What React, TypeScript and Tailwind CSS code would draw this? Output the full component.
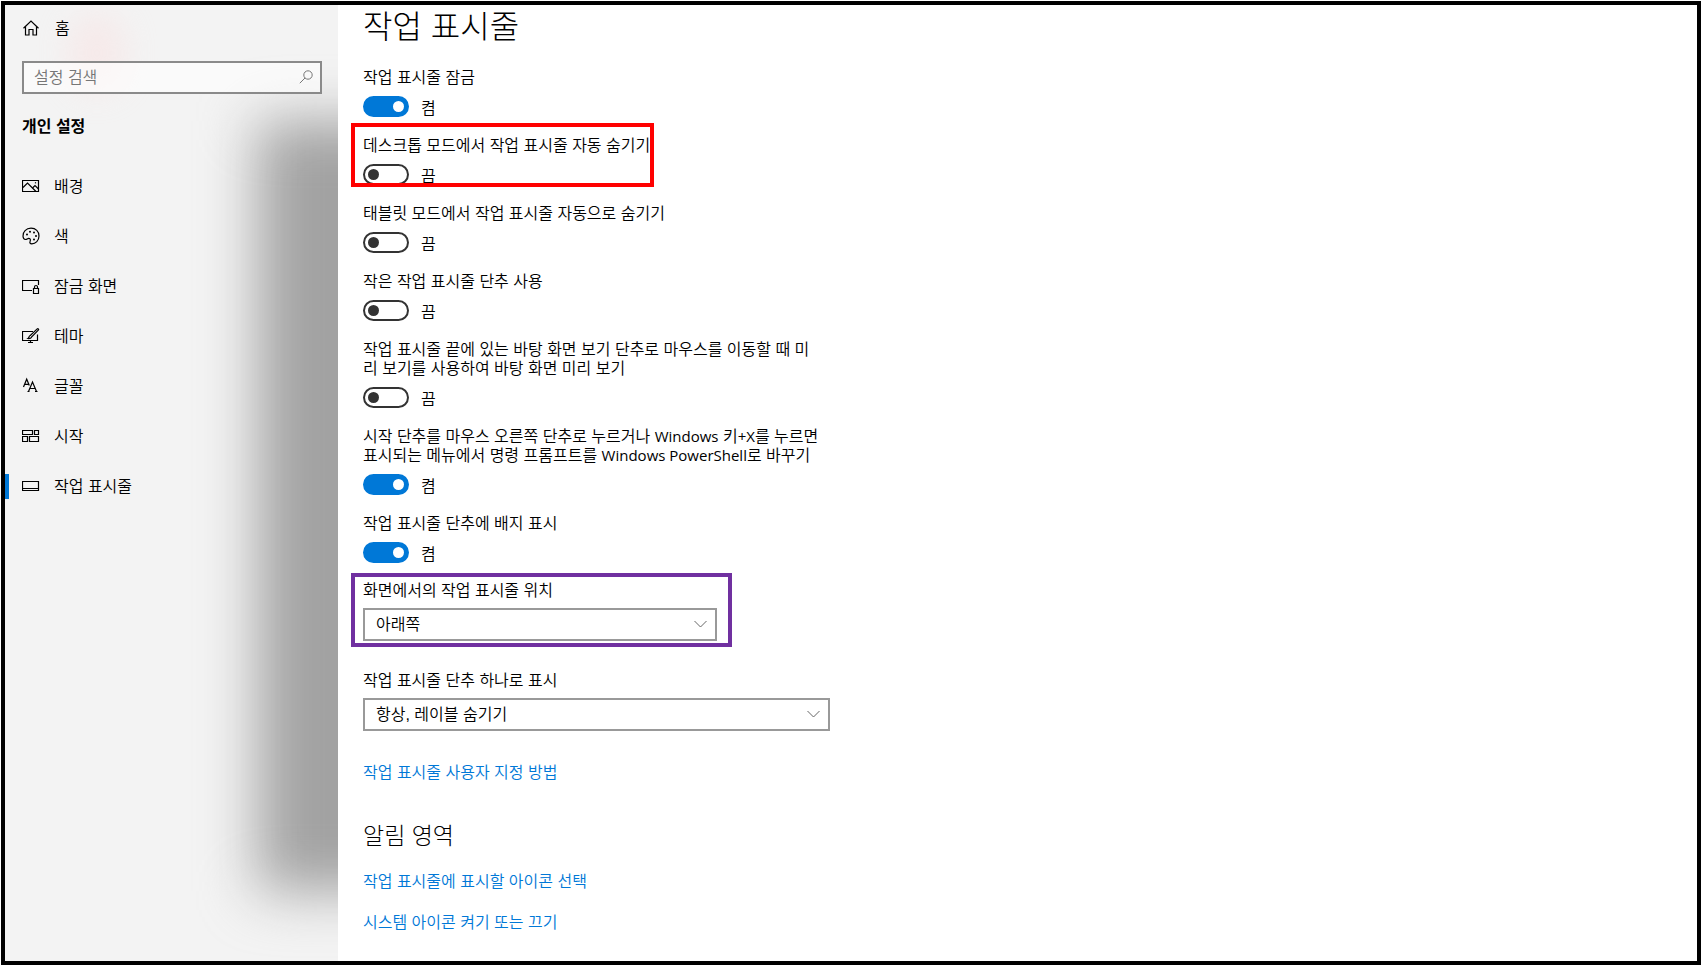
import React, { useState } from 'react';

type IconProps = React.SVGProps<SVGSVGElement>;

const Svg: React.FC<IconProps> = ({ children, ...props }) => (
  <svg width="18" height="18" viewBox="0 0 18 18" fill="none" stroke="currentColor" strokeWidth="1.2" aria-hidden="true" {...props}>
    {children}
  </svg>
);

const Icons = {
  Home: () => (
    <Svg>
      <path d="M1.5 9.2 9 2l7.500 7.200" />
      <path d="M3.500 7.500V16h3.500v-5.500h4V16h3.500V7.500" />
    </Svg>
  ),
  Background: () => (
    <Svg>
      <path d="M.5 3.500h16v11H.5z" />
      <path d="M1 10.500 5.500 6l8.500 8.500" />
      <path d="m10.500 11 2.500-2.500 3.500 3.500" />
      <path d="M13.500 5.200v1.200" />
    </Svg>
  ),
  Colors: () => (
    <Svg>
      <path d="M1 9.200C.6 4.800 4.200 1.200 9 1.200s8 3.400 8 7.800-3.400 7.800-7.200 7.800c-1.800 0-2.300-1.100-1.700-2.500.6-1.500.3-2.700-1-2.900-1.500-.3-2.200 1.200-3.600 1.100C1.900 12.400 1.100 11 1 9.200z" />
      <g fill="currentColor" stroke="none">
        <circle cx="5" cy="7.500" r="1" />
        <circle cx="8" cy="4.800" r="1" />
        <circle cx="12" cy="5.500" r="1" />
        <circle cx="14" cy="9" r="1" />
        <circle cx="12" cy="12.500" r="1" />
      </g>
    </Svg>
  ),
  LockScreen: () => (
    <Svg>
      <path d="M10 13.500H.5v-10h16V8" />
      <path d="M11.500 11.500h5v5h-5zM12.500 11.500V10a1.500 1.500 0 0 1 3 0v1.500" />
    </Svg>
  ),
  Themes: () => (
    <Svg>
      <path d="M11 4.500H.5v9h15V7.500M8.500 13.500V16M6 15.500h5" />
      <path d="M6 11.500c1.400.1 3 0 3.500-1.300L16.500 3c.5-.8-.5-1.700-1.300-1.100L8.300 8.500C6.800 8.900 7.300 10.600 6 11.500z" />
    </Svg>
  ),
  Fonts: () => (
    <Svg>
      <path d="M1.500 10 4.700 2.200 7.300 8.500M2.700 7.300H6.500" />
      <path d="m6.500 14.500 4-9.500 4 9.500M7.800 11.500h5.300M5.500 14.500h2M13 14.500h2.500" />
    </Svg>
  ),
  Start: () => (
    <Svg>
      <path d="M.5 3.500h10v4H.5zM12.500 3.500h4v4h-4zM.5 9.500h5v5h-5zM7.500 9.500h9v5h-9z" />
    </Svg>
  ),
  Taskbar: () => (
    <Svg>
      <path d="M.5 4.500h16v9H.5zM.5 11.500h16" />
    </Svg>
  ),
};

const NAV = [
  { label: '배경', icon: <Icons.Background /> },
  { label: '색', icon: <Icons.Colors /> },
  { label: '잠금 화면', icon: <Icons.LockScreen /> },
  { label: '테마', icon: <Icons.Themes /> },
  { label: '글꼴', icon: <Icons.Fonts /> },
  { label: '시작', icon: <Icons.Start /> },
  { label: '작업 표시줄', icon: <Icons.Taskbar />, active: true },
];

const Latin: React.FC<{ children: string }> = ({ children }) => (
  <span className="font-['Open_Sans',sans-serif] text-[15px] leading-none font-normal">{children}</span>
);

const TOGGLES = [
  { id: 'lock', label: '작업 표시줄 잠금', on: true },
  { id: 'hide-desktop', label: '데스크톱 모드에서 작업 표시줄 자동 숨기기', on: false, marked: true },
  { id: 'hide-tablet', label: '태블릿 모드에서 작업 표시줄 자동으로 숨기기', on: false },
  { id: 'small', label: '작은 작업 표시줄 단추 사용', on: false },
  { id: 'peek', label: '작업 표시줄 끝에 있는 바탕 화면 보기 단추로 마우스를 이동할 때 미\n리 보기를 사용하여 바탕 화면 미리 보기', on: false },
  {
    id: 'powershell',
    label: (
      <>
        시작 단추를 마우스 오른쪽 단추로 누르거나 <Latin>Windows</Latin> 키<Latin>+X</Latin>를 누르면{'\n'}
        표시되는 메뉴에서 명령 프롬프트를 <Latin>Windows PowerShell</Latin>로 바꾸기
      </>
    ),
    on: true,
  },
  { id: 'badge', label: '작업 표시줄 단추에 배지 표시', on: true },
];

const Toggle: React.FC<{ id: string; label: React.ReactNode; on: boolean; marked?: boolean }> = ({ id, label, on, marked }) => {
  const [checked, setChecked] = useState(on);

  return (
    <div className="relative">
      <label htmlFor={id} className="block whitespace-pre-line">{label}</label>
      <div className="mt-[9px] flex h-[21px] gap-3">
        <input
          id={id}
          type="checkbox"
          role="switch"
          checked={checked}
          onChange={() => setChecked(!checked)}
          className="flex h-[21px] w-[46px] appearance-none items-center rounded-full border-2 border-[#333] px-[3px] before:size-[11px] before:rounded-full before:bg-[#333] checked:justify-end checked:border-[#0078d7] checked:bg-[#0078d7] checked:before:bg-white"
        />
        <span className="mt-[3px]">{checked ? '켬' : '끔'}</span>
      </div>
      {marked && <div className="pointer-events-none absolute -top-[13px] -left-3 h-16 w-[303px] border-4 border-[#ff0000]" />}
    </div>
  );
};

const Select: React.FC<{ id: string; label: string; options: string[]; width: string; marked?: boolean }> = ({ id, label, options, width, marked }) => (
  <div className="relative">
    <label htmlFor={id} className="block">{label}</label>
    <div className={`relative mt-2 ${width}`}>
      <select id={id} className="block h-[33px] w-full appearance-none border-2 border-[#999] bg-white px-[11px]">
        {options.map((option) => (
          <option key={option}>{option}</option>
        ))}
      </select>
      <svg className="pointer-events-none absolute top-3 right-[10px]" width="13" height="8" viewBox="0 0 13 8" fill="none" stroke="#666" aria-hidden="true">
        <path d="m.5 1 6 6 6-6" />
      </svg>
    </div>
    {marked && <div className="pointer-events-none absolute -top-2 -left-3 h-[74px] w-[381px] border-4 border-[#7030a0]" />}
  </div>
);

const Sidebar: React.FC = () => (
  <aside className="relative isolate w-[333px] shrink-0 overflow-hidden bg-[#f3f3f3]">
    {/* acrylic backdrop */}
    <div className="absolute top-[116px] -right-24 bottom-[70px] -z-10 w-[176px] bg-[#a2a2a2] blur-[28px]" />
    <div className="absolute top-2 left-16 -z-10 h-20 w-14 rounded-full bg-[#fbdcdc] opacity-40 blur-[16px]" />

    <a href="#home" className="mt-[14px] flex h-[18px] items-center gap-[15px] pl-[17px]">
      <Icons.Home />
      홈
    </a>

    <div className="relative mt-6 mr-4 ml-[17px]">
      <input
        type="search"
        aria-label="설정 검색"
        placeholder="설정 검색"
        className="block h-[33px] w-full border-2 border-[#8a8a8a] bg-white/60 px-2.5 placeholder:text-[#767676]"
      />
      <svg className="pointer-events-none absolute top-[9px] right-[9px]" width="14" height="14" viewBox="0 0 14 14" fill="none" stroke="#777" aria-hidden="true">
        <circle cx="9" cy="5" r="4.200" />
        <path d="M6 8 .8 13.200" />
      </svg>
    </div>

    <h2 className="mt-[23px] pl-[17px] font-bold">개인 설정</h2>

    <nav className="mt-[25px]">
      {NAV.map((item) => (
        <a key={item.label} href="#" className="relative flex h-[50px] items-center gap-[14px] pl-[17px]">
          {item.active && <span className="absolute left-0 h-[25px] w-1 bg-[#0078d7]" />}
          {item.icon}
          {item.label}
        </a>
      ))}
    </nav>
  </aside>
);

const App: React.FC = () => (
  <div className="flex min-h-screen bg-white p-px font-['Liberation_Sans','Noto_Sans_CJK_KR',sans-serif] text-[16px] leading-[19px] font-[350] text-black">
    <div className="flex flex-1 border-4 border-black">
      <Sidebar />

      <main className="flex-1 pb-6 pl-[25px]">
        <h1 className="mt-0.5 mb-[21px] text-[32px] leading-10 font-light">작업 표시줄</h1>

        <div className="flex flex-col gap-[19px]">
          {TOGGLES.map((toggle) => (
            <Toggle key={toggle.id} {...toggle} />
          ))}
        </div>

        <div className="mt-[18px] flex flex-col gap-[30px]">
          <Select id="position" label="화면에서의 작업 표시줄 위치" options={['아래쪽', '위쪽', '왼쪽', '오른쪽']} width="w-[354px]" marked />
          <Select id="combine" label="작업 표시줄 단추 하나로 표시" options={['항상, 레이블 숨기기', '작업 표시줄이 꽉 찼을 때', '안 함']} width="w-[467px]" />
        </div>

        <p className="mt-8">
          <a href="#customize" className="text-[#0078d7]">작업 표시줄 사용자 지정 방법</a>
        </p>

        <h2 className="mt-[39px] mb-[21px] text-[23px] leading-[30px] font-light">알림 영역</h2>
        <div className="flex flex-col items-start gap-[22px] text-[#0078d7]">
          <a href="#icons">작업 표시줄에 표시할 아이콘 선택</a>
          <a href="#system-icons">시스템 아이콘 켜기 또는 끄기</a>
        </div>
      </main>
    </div>
  </div>
);

export default App;
